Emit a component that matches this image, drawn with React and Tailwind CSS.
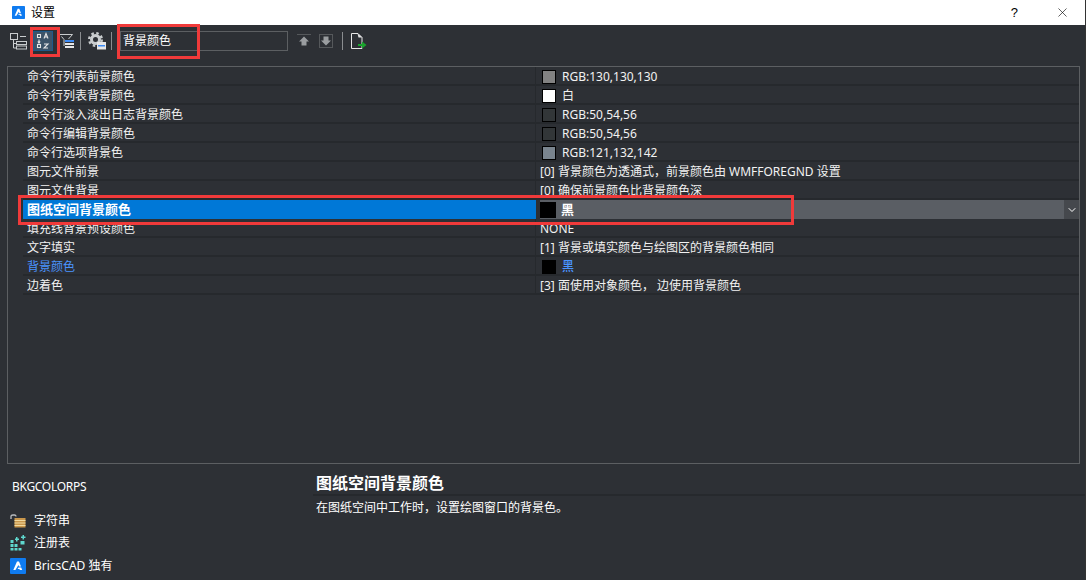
import React from "react";
import { X, ChevronDown } from "lucide-react";

const FONT = "font-['Noto_Sans','Noto_Sans_CJK_SC',sans-serif]";

const rows = [
  { name: "命令行列表前景颜色", value: "RGB:130,130,130", swatch: "bg-[#828282]" },
  { name: "命令行列表背景颜色", value: "白", swatch: "bg-white" },
  { name: "命令行淡入淡出日志背景颜色", value: "RGB:50,54,56", swatch: "bg-[#323638]" },
  { name: "命令行编辑背景颜色", value: "RGB:50,54,56", swatch: "bg-[#323638]" },
  { name: "命令行选项背景色", value: "RGB:121,132,142", swatch: "bg-[#79848e]" },
  { name: "图元文件前景", value: "[0] 背景颜色为透通式，前景颜色由 WMFFOREGND 设置" },
  { name: "图元文件背景", value: "[0] 确保前景颜色比背景颜色深" },
  { name: "图纸空间背景颜色", value: "黑", swatch: "bg-black", selected: true },
  { name: "填充线背景预设颜色", value: "NONE" },
  { name: "文字填实", value: "[1] 背景或填实颜色与绘图区的背景颜色相同" },
  { name: "背景颜色", value: "黑", swatch: "bg-black", changed: true },
  { name: "边着色", value: "[3] 面使用对象颜色， 边使用背景颜色" },
];

const LogoIcon = ({ className }) => (
  <svg viewBox="0 0 16 16" className={className}>
    <rect width="16" height="16" rx="1" fill="#0f7bf0" />
    <path d="M7 3.500h2l2 5h-2l-.6-1.500-3 5H3.300zM9 9.500h2.200l1 2.500H9.900l-.5-1.100H7.600l.8-1.400z" fill="#fff" />
  </svg>
);

const Row = ({ row }) => {
  if (row.selected) {
    return (
      <div className="flex h-[19px] bg-[#2d3035]">
        <div className="w-[513px] bg-[#0078d7] pl-[4px] text-[13px] leading-[19px] font-bold text-white">{row.name}</div>
        <div className="w-[4px] bg-[#2d3035]" />
        <div className="flex flex-1 items-center gap-[5px] bg-[#5a5e64] text-[13px] font-bold text-white">
          <span className={`h-[16px] w-[16px] ${row.swatch}`} />
          {row.value}
        </div>
        <div className="flex w-[15px] items-center justify-center bg-[#45484d]">
          <ChevronDown size={12} strokeWidth={2} color="#fff" />
        </div>
      </div>
    );
  }
  const color = row.changed ? "text-[#4a94ff]" : "text-[#f2f2f2]";
  return (
    <div className={`flex h-[19px] border-b-2 border-[#26292d] text-[12px] leading-[19px] ${color}`}>
      <div className="w-[513px] border-r border-[#26292d] pl-[4px]">{row.name}</div>
      <div className="flex h-[19px] flex-1 items-center pl-[4px]">
        {row.swatch && <span className={`mr-[6px] ml-[2px] h-[14px] w-[14px] border border-black ${row.swatch}`} />}
        <span className={row.changed ? "font-medium" : ""}>{row.value}</span>
      </div>
    </div>
  );
};

export default function App() {
  return (
    <div className={`relative flex h-[580px] w-[1086px] flex-col overflow-hidden border-r border-[#333] bg-[#2d3035] text-white ${FONT}`}>
      {/* title bar */}
      <div className="flex h-[25px] items-center bg-white pl-[12px] text-black">
        <LogoIcon className="h-[13px] w-[13px]" />
        <span className="ml-[6px] text-[12px]">设置</span>
        <span className="ml-auto mr-[37px] text-[13px] font-['Liberation_Sans',sans-serif]">?</span>
        <X size={15} strokeWidth={1} className="mr-[15px]" />
      </div>

      {/* toolbar */}
      <div className="flex h-[41px] items-center pb-[9px] pl-[10px]">
        <svg viewBox="0 0 17 17" className="h-[17px] w-[17px]" fill="none" stroke="#c9ccce" strokeWidth="1">
          <rect x="0.500" y="0.500" width="7" height="6" />
          <path d="M3.500 7v8h3M3.500 10.500h3M10 3.500h6" />
          <rect x="6.500" y="8.500" width="10" height="3" />
          <rect x="6.500" y="13" width="10" height="3" />
        </svg>
        <div className="ml-[6px] flex h-[20px] w-[20px] items-center justify-center border border-[#1e5a8a] bg-[#3c5368]">
          <svg viewBox="0 0 16 18" className="h-[18px] w-[16px]" fill="none" stroke="#e6e6e6" strokeWidth="1.100">
            <rect x="2.500" y="2.500" width="3" height="3" />
            <path d="M9 6.500l2-5 2 5M9.800 5h2.400" />
            <path d="M4 7.500v3M2.800 9.500L4 11l1.200-1.500" />
            <rect x="2.500" y="12.500" width="3" height="3" />
            <path d="M9 12h4l-4 4h4" />
          </svg>
        </div>
        <svg viewBox="0 0 16 16" className="ml-[5px] h-[16px] w-[16px]" fill="none" stroke="#c9ccce" strokeWidth="1">
          <path d="M0.500 1.500h14L10.500 6M3.500 3.500L6 6.500V13" />
          <rect x="7" y="7" width="9" height="2" fill="#3d8bf5" stroke="none" />
          <rect x="7" y="10" width="9" height="2" fill="#e6e6e6" stroke="none" />
          <rect x="7" y="13" width="9" height="2" fill="#e6e6e6" stroke="none" />
        </svg>
        <div className="ml-[6px] h-[18px] w-px bg-[#8a8d90]" />
        <svg viewBox="0 0 18 18" className="ml-[7px] h-[18px] w-[18px]">
          <circle cx="7.500" cy="7.500" r="4" fill="none" stroke="#c9ccce" strokeWidth="3" />
          <circle cx="7.500" cy="7.500" r="6.300" fill="none" stroke="#c9ccce" strokeWidth="2.400" strokeDasharray="2.500 2.450" />
          <rect x="9" y="10" width="9" height="7.500" fill="#e6e6e6" />
          <rect x="10" y="13" width="7" height="1.500" fill="#3d8bf5" />
        </svg>
        <div className="ml-[5px] h-[18px] w-px bg-[#8a8d90]" />
        <div className="ml-[8px] flex h-[20px] w-[168px] items-center border border-[#5c5f62] pl-[2px] text-[12px]">背景颜色</div>
        <svg viewBox="0 0 14 14" className="ml-[9px] h-[14px] w-[14px]">
          <path d="M0 0.500h14" stroke="#55585b" />
          <path d="M7 2.500l5 5H9.500v4h-5v-4H2z" fill="#9a9da0" />
        </svg>
        <svg viewBox="0 0 14 14" className="ml-[8px] h-[14px] w-[14px]">
          <rect x="0.500" y="0.500" width="13" height="13" fill="none" stroke="#55585b" />
          <path d="M4.500 2.500h5v4H12l-5 5-5-5h2.500z" fill="#9a9da0" />
        </svg>
        <div className="ml-[9px] h-[18px] w-px bg-[#8a8d90]" />
        <svg viewBox="0 0 17 18" className="ml-[7px] h-[18px] w-[17px]">
          <path d="M1.500 1.500h6.500l4 4v11h-10.500z" fill="none" stroke="#e6e6e6" />
          <path d="M7.500 1.500l1 4h4z" fill="#e6e6e6" />
          <path d="M8 12h4V9.500l4.500 3.500-4.500 3.500V14H8z" fill="#19a32c" />
        </svg>
      </div>

      {/* settings grid */}
      <div className="mx-[7px] h-[398px] w-[1073px] border border-[#5c5f62]">
        <div className="ml-[15px]">
          {rows.map((row, i) => (
            <Row key={i} row={row} />
          ))}
        </div>
      </div>

      {/* description */}
      <div className="flex flex-1">
        <div className="w-[313px] pl-[12px] pt-[14px] text-[12px]">
          <div className="tracking-[-0.3px]">BKGCOLORPS</div>
          <div className="mt-[16px] flex flex-col gap-[5.5px]">
            <div className="flex h-[17px] items-center gap-[8px]">
              <svg viewBox="0 0 16 14" className="-ml-[2px] h-[14px] w-[16px]">
                <path d="M1 5V2.500Q1 1 3 1h1.500Q6 1 6 2.500" fill="none" stroke="#b9bcc0" strokeWidth="1.300" />
                <rect x="4.500" y="4" width="11" height="9.500" fill="#c9974c" />
                <path d="M4.500 6.500h11M4.500 9h11M4.500 11.500h11" stroke="#f0d9a0" />
              </svg>
              <span>字符串</span>
            </div>
            <div className="flex h-[17px] items-center gap-[8px]">
              <svg viewBox="0 0 16 16" className="-ml-[2px] h-[16px] w-[16px]" fill="#5fd8cf">
                <rect x="0.500" y="5" width="3" height="3" />
                <rect x="0.500" y="9" width="3" height="3" />
                <rect x="4.500" y="9" width="3" height="3" />
                <rect x="0.500" y="13" width="3" height="2.500" />
                <rect x="4.500" y="13" width="3" height="2.500" />
                <rect x="8.500" y="13" width="3" height="2.500" />
                <path d="M5 3.500h1V2h1.500v1.500H9V5H7.500v1.500H6V5H5zM12.500 0H14v1.500h1.500V3H14v1.500h-1.500V3H11V1.500h1.500z" />
                <rect x="10.500" y="6" width="4" height="3.500" />
              </svg>
              <span>注册表</span>
            </div>
            <div className="flex h-[17px] items-center gap-[8px]">
              <LogoIcon className="-ml-[2px] h-[16px] w-[16px]" />
              <span>BricsCAD 独有</span>
            </div>
          </div>
        </div>
        <div className="flex-1 pt-[9px]">
          <div className="h-[23px] border-b-2 border-[#26292d] pl-[3px] text-[16px] leading-[20px] font-bold">图纸空间背景颜色</div>
          <div className="mt-[3px] pl-[3px] text-[12px] leading-[18px]">在图纸空间中工作时，设置绘图窗口的背景色。</div>
        </div>
      </div>

      {/* red annotation boxes */}
      <div className="absolute left-[30px] top-[27px] h-[30px] w-[30px] border-[3px] border-[#f03a3a]" />
      <div className="absolute left-[117px] top-[24px] h-[35px] w-[83px] border-[3px] border-[#f03a3a]" />
      <div className="absolute left-[18px] top-[195px] h-[30px] w-[776px] border-[3px] border-[#f03a3a]" />
    </div>
  );
}
